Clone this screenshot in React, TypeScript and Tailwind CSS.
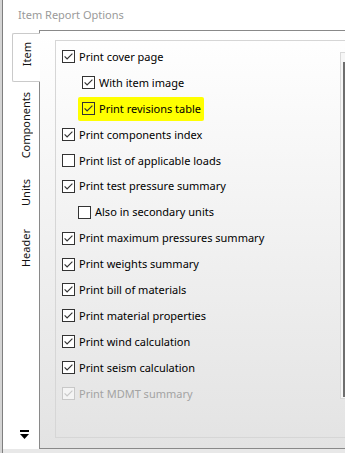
import React from "react";

type Row = {
  t: string;
  c: boolean;
  pad: string;
  hl?: boolean;
  dis?: boolean;
};

const rows: Row[] = [
  { t: "Print cover page", c: true, pad: "pl-0" },
  { t: "With item image", c: true, pad: "pl-[20px]" },
  { t: "Print revisions table", c: true, pad: "pl-[16px]", hl: true },
  { t: "Print components index", c: true, pad: "pl-0" },
  { t: "Print list of applicable loads", c: false, pad: "pl-0" },
  { t: "Print test pressure summary", c: true, pad: "pl-0" },
  { t: "Also in secondary units", c: false, pad: "pl-[16px]" },
  { t: "Print maximum pressures summary", c: true, pad: "pl-0" },
  { t: "Print weights summary", c: true, pad: "pl-0" },
  { t: "Print bill of materials", c: true, pad: "pl-0" },
  { t: "Print material properties", c: true, pad: "pl-0" },
  { t: "Print wind calculation", c: true, pad: "pl-0" },
  { t: "Print seism calculation", c: true, pad: "pl-0" },
  { t: "Print MDMT summary", c: true, pad: "pl-0", dis: true },
];

function Check({ checked, disabled, hl }: { checked: boolean; disabled?: boolean; hl?: boolean }) {
  const c = disabled ? "#c8c8c8" : "#333333";
  const bg = hl ? "#ffff00" : disabled ? "#f4f4f4" : "#ffffff";
  return (
    <svg width="13" height="13" viewBox="0 0 13 13" className="shrink-0 block">
      <rect x="0.5" y="0.5" width="12" height="12" fill={bg} stroke={c} strokeWidth="1" />
      {checked && (
        <path d="M2.6 6.4 L5.1 8.9 L10.4 3.6" fill="none" stroke={c} strokeWidth="1.15" />
      )}
    </svg>
  );
}

function VText({ children }: { children: React.ReactNode }) {
  return (
    <span className="[writing-mode:vertical-rl] rotate-180 text-[11px] leading-[14px] text-[#111]">
      {children}
    </span>
  );
}

export default function App() {
  return (
    <div className="w-[345px] h-[453px] overflow-hidden bg-white flex font-['Noto_Sans','Open_Sans',sans-serif] text-[11px]">
      <div className="w-[2px] h-full shrink-0 bg-[#d4d4d4]" />
      <div className="w-[1px] h-full shrink-0 bg-[#7f7f7f]" />
      <div className="flex-1 flex flex-col min-w-0">
        <div className="h-[30px] shrink-0 flex items-center pl-[15px] text-[#9a9a9a] text-[11px] leading-[14px]">
          Item Report Options
        </div>
        <div className="h-[419px] shrink-0 flex">
          <div className="w-[36px] shrink-0 flex flex-col pt-[3px] bg-white">
            <div className="relative z-10 ml-[9px] w-[28px] h-[49px] shrink-0 bg-white border border-r-0 border-[#cacaca] rounded-l-[2px] flex justify-center items-start pt-[8px]">
              <VText>Item</VText>
            </div>
            <div className="ml-[9px] w-[28px] h-[86px] shrink-0 flex justify-center items-center">
              <VText>Components</VText>
            </div>
            <div className="ml-[9px] w-[28px] h-[48px] shrink-0 flex justify-center items-center">
              <VText>Units</VText>
            </div>
            <div className="ml-[9px] w-[28px] h-[64px] shrink-0 flex justify-center items-center">
              <VText>Header</VText>
            </div>
            <div className="mt-auto pl-[17px] pb-[9px]">
              <svg width="10" height="10" viewBox="0 0 10 10" className="block">
                <rect x="0" y="0" width="9" height="2" fill="#000" />
                <polygon points="0,4 9,4 4.5,9" fill="#000" />
              </svg>
            </div>
          </div>
          <div className="flex-1 min-w-0 border-l border-t border-b border-[#898989] bg-gradient-to-b from-white to-[#e3e3e3] pt-[9px] pl-[15px] pb-[10px]">
            <div className="w-[320px] h-full border border-[#d6d6d6] flex items-start">
              <div className="w-[284px] shrink-0 pt-[3px] pl-[6px]">
                {rows.map((r) => (
                  <div key={r.t} className={`h-[25.9px] flex items-center ${r.pad}`}>
                    {r.hl ? (
                      <div className="flex items-center h-[24px] bg-[#ffff00] pl-[4px] pr-[3px] rounded-[2px]">
                        <Check checked={r.c} hl />
                        <span className="ml-[4px] leading-[14px] text-black whitespace-nowrap">{r.t}</span>
                      </div>
                    ) : (
                      <>
                        <Check checked={r.c} disabled={r.dis} />
                        <span
                          className={`ml-[4px] leading-[14px] whitespace-nowrap ${r.dis ? "text-[#a3a3a3]" : "text-black"}`}
                        >
                          {r.t}
                        </span>
                      </>
                    )}
                  </div>
                ))}
              </div>
              <div className="mt-[11px] w-[20px] h-[347px] shrink-0 border-l border-t border-b border-[#d9d9d9] bg-[#f6f6f6]">
                <div className="mt-[9px] ml-[2px] w-[2px] h-[335px] bg-[#6e6e6e]" />
              </div>
            </div>
          </div>
        </div>
        <div className="flex-1 bg-[#e8e8e8]" />
      </div>
    </div>
  );
}
